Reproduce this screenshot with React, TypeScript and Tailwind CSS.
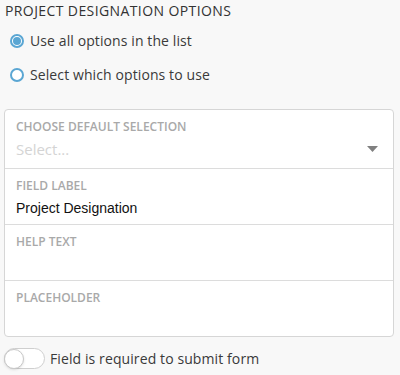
import { useState } from 'react';

// ── Petits composants ────────────────────────────────────────────────────
const Radio = ({ checked, label, onClick }: { checked: boolean; label: string; onClick: () => void }) => (
  <label onClick={onClick} className="flex items-center gap-[6px] cursor-pointer">
    <span className="w-[14px] h-[14px] rounded-full border-[2px] border-[#5aa6d3] bg-white flex items-center justify-center">
      {checked && <span className="w-[8px] h-[8px] rounded-full bg-[#5aa6d3]" />}
    </span>
    <span className="text-[14px] text-[#3a3a3a] tracking-[0.1px]">{label}</span>
  </label>
);

const FieldLabel = ({ children }: { children: string }) => (
  <div className="text-[12px] font-semibold uppercase text-[#a9a9a9] leading-4">{children}</div>
);

export default function App() {
  const [useAll, setUseAll] = useState(true);
  const [required, setRequired] = useState(false);

  return (
    <div className="w-[400px] h-[375px] bg-[#f8f8f8] font-['Open_Sans',sans-serif] overflow-hidden">
      <div className="px-[5px] pt-[1px]">
        <h3 className="text-[14px] font-medium text-[#333] leading-[19px] tracking-[0.4px]">PROJECT DESIGNATION OPTIONS</h3>

        <div className="pl-[5px] mt-[10px] flex flex-col gap-[13px]">
          <Radio checked={useAll} label="Use all options in the list" onClick={() => setUseAll(true)} />
          <Radio checked={!useAll} label="Select which options to use" onClick={() => setUseAll(false)} />
        </div>
      </div>

      {/* Form box */}
      <div className="mt-[24px] ml-[4px] w-[390px] bg-white border border-[#d6d6d6] rounded-[4px] divide-y divide-[#dcdcdc]">
        <div className="h-[59px] px-[11px] pt-[9px]">
          <FieldLabel>Choose default selection</FieldLabel>
          <div className="flex items-center justify-between mt-[4px]">
            <span className="text-[15px] text-[#d4d4d4] leading-5">Select...</span>
            <svg className="w-[11px] h-[6px] mr-[4px]" viewBox="0 0 11 6">
              <path d="M0 0h11L5.5 6z" fill="#808080" />
            </svg>
          </div>
        </div>
        <div className="h-[56px] px-[11px] pt-[9px]">
          <FieldLabel>Field label</FieldLabel>
          <div className="mt-[4px] text-[14px] text-[#111] leading-5 font-['Liberation_Sans',Arial,sans-serif]">Project Designation</div>
        </div>
        <div className="h-[56px] px-[11px] pt-[9px]">
          <FieldLabel>Help text</FieldLabel>
        </div>
        <div className="h-[55px] px-[11px] pt-[9px]">
          <FieldLabel>Placeholder</FieldLabel>
        </div>
      </div>

      {/* Toggle */}
      <div className="mt-[11px] ml-[4px] flex items-center gap-[5px]">
        <button
          onClick={() => setRequired(!required)}
          className={`w-[41px] h-[21px] rounded-full border border-[#cfcfcf] flex items-center ${required ? 'bg-[#5aa6d3] justify-end' : 'bg-white justify-start'}`}
        >
          <span className="w-[20px] h-[20px] -ml-[1px] rounded-full bg-white border border-[#c8c8c8] shadow-sm" />
        </button>
        <span className="text-[14px] text-[#3a3a3a] tracking-[0.1px]">Field is required to submit form</span>
      </div>
    </div>
  );
}
